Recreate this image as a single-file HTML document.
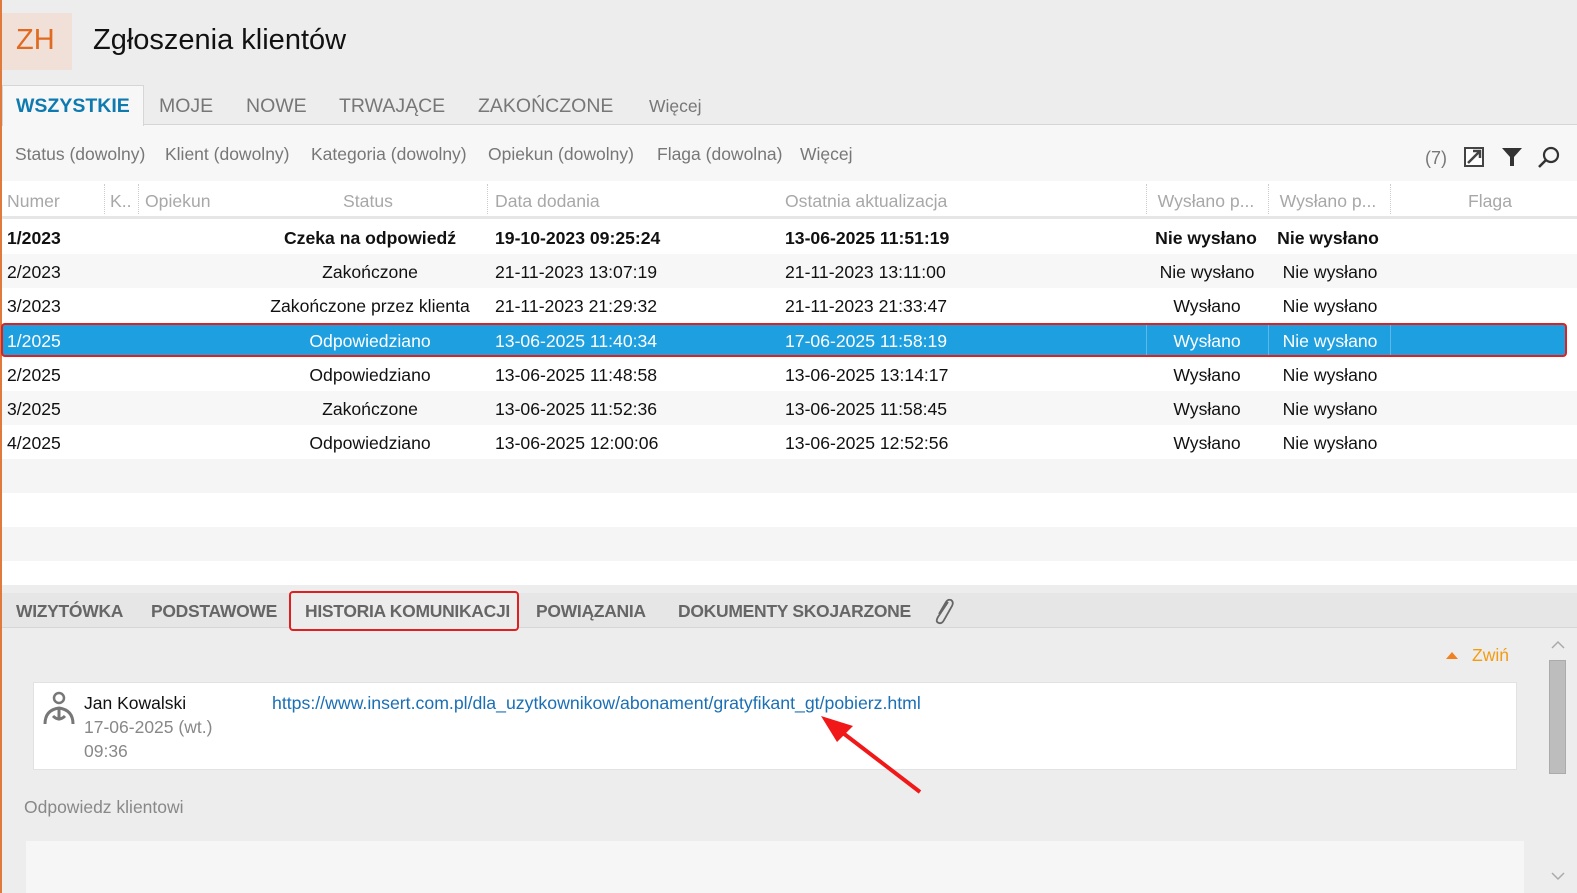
<!DOCTYPE html>
<html><head><meta charset="utf-8"><style>
*{margin:0;padding:0;box-sizing:border-box}
body{width:1577px;height:893px;overflow:hidden;background:#ededed;font-family:"Liberation Sans",sans-serif;position:relative;color:#111}
.a{position:absolute;white-space:nowrap}
.row{position:absolute;left:2px;width:1575px;height:34px;font-size:17.6px}
.row span{position:absolute;top:8px;white-space:nowrap}
.c{transform:translateX(-50%)}
.hd span{color:#a8a8a8}
.tab{position:absolute;top:95px;font-size:19.5px;color:#777}
.btab{position:absolute;top:601px;font-size:17.5px;color:#666;font-weight:bold;letter-spacing:-0.3px}
.flt{position:absolute;top:144px;font-size:17.5px;color:#777}
</style></head><body>
<div class="a" style="left:0;top:0;width:2px;height:893px;background:#e07a3c"></div>
<div class="a" style="left:2px;top:13px;width:70px;height:57px;background:#f0e0d8"></div>
<div class="a" style="left:16px;top:24px;font-size:29px;color:#e06a20">ZH</div>
<div class="a" style="left:93px;top:24px;font-size:29px;color:#111">Zgłoszenia klientów</div>
<div class="a" style="left:2px;top:124px;width:1575px;height:1px;background:#d6d6d6"></div>
<div class="a" style="left:2px;top:125px;width:1575px;height:56px;background:#f7f7f7"></div>
<div class="a" style="left:2px;top:85px;width:142px;height:41px;background:#f7f7f7;border:1px solid #d6d6d6;border-bottom:none"></div>
<div class="tab" style="left:16px;color:#0e7ab0;font-weight:bold">WSZYSTKIE</div>
<div class="tab" style="left:159px">MOJE</div>
<div class="tab" style="left:246px">NOWE</div>
<div class="tab" style="left:339px">TRWAJĄCE</div>
<div class="tab" style="left:478px">ZAKOŃCZONE</div>
<div class="tab" style="left:649px;font-size:17.5px;top:96px">Więcej</div>
<div class="flt" style="left:15px">Status (dowolny)</div>
<div class="flt" style="left:165px">Klient (dowolny)</div>
<div class="flt" style="left:311px">Kategoria (dowolny)</div>
<div class="flt" style="left:488px">Opiekun (dowolny)</div>
<div class="flt" style="left:657px">Flaga (dowolna)</div>
<div class="flt" style="left:800px">Więcej</div>
<div class="a" style="left:1425px;top:148px;font-size:18px;color:#777">(7)</div>
<svg class="a" style="left:1463px;top:146px" width="22" height="22" viewBox="0 0 22 22"><rect x="1" y="1" width="20" height="20" fill="#444"/><rect x="3" y="3" width="16" height="16" fill="#fff"/><path d="M5 17 L17 5 M10 5 H17 V12" stroke="#444" stroke-width="2.5" fill="none"/></svg>
<svg class="a" style="left:1501px;top:147px" width="22" height="20" viewBox="0 0 22 20"><path d="M1 1 H21 L13 10 V19 H9 V10 Z" fill="#333"/></svg>
<svg class="a" style="left:1537px;top:146px" width="24" height="22" viewBox="0 0 24 22"><circle cx="14" cy="9" r="7" stroke="#333" stroke-width="2.2" fill="none"/><path d="M9 14 L2 21" stroke="#333" stroke-width="2.6"/></svg>
<div class="a" style="left:2px;top:181px;width:1575px;height:404px;background:#fff"></div>
<div class="a" style="left:2px;top:216px;width:1575px;height:3px;background:#e6e6e6"></div>
<div class="row hd" style="top:183px"><span style="left:5px">Numer</span><span style="left:108px">K..</span><span style="left:143px">Opiekun</span><span class="c" style="left:366px">Status</span><span style="left:493px">Data dodania</span><span style="left:783px">Ostatnia aktualizacja</span><span class="c" style="left:1204px">Wysłano p...</span><span class="c" style="left:1326px">Wysłano p...</span><span class="c" style="left:1488px">Flaga</span></div>
<div class="a" style="left:104px;top:184px;height:30px;border-left:1px dotted #ccc"></div>
<div class="a" style="left:138px;top:184px;height:30px;border-left:1px dotted #ccc"></div>
<div class="a" style="left:487px;top:184px;height:30px;border-left:1px dotted #ccc"></div>
<div class="a" style="left:1146px;top:184px;height:30px;border-left:1px dotted #ccc"></div>
<div class="a" style="left:1268px;top:184px;height:30px;border-left:1px dotted #ccc"></div>
<div class="a" style="left:1390px;top:184px;height:30px;border-left:1px dotted #ccc"></div>

<div class="row" style="top:220px;font-weight:bold"><span style="left:5px">1/2023</span><span class="c" style="left:368px">Czeka na odpowiedź</span><span style="left:493px">19-10-2023 09:25:24</span><span style="left:783px">13-06-2025 11:51:19</span><span class="c" style="left:1204px">Nie wysłano</span><span class="c" style="left:1326px">Nie wysłano</span></div>
<div class="row" style="top:254px;background:#f7f7f7"><span style="left:5px">2/2023</span><span class="c" style="left:368px">Zakończone</span><span style="left:493px">21-11-2023 13:07:19</span><span style="left:783px">21-11-2023 13:11:00</span><span class="c" style="left:1205px">Nie wysłano</span><span class="c" style="left:1328px">Nie wysłano</span></div>
<div class="row" style="top:288px"><span style="left:5px">3/2023</span><span class="c" style="left:368px">Zakończone przez klienta</span><span style="left:493px">21-11-2023 21:29:32</span><span style="left:783px">21-11-2023 21:33:47</span><span class="c" style="left:1205px">Wysłano</span><span class="c" style="left:1328px">Nie wysłano</span></div>
<div class="row" style="top:323px;height:34px;left:1px;width:1566px;background:#1e9fe0;color:#fff;border:2px solid #e02020;border-radius:4px"><span style="left:4px;top:6px">1/2025</span><span class="c" style="left:367px;top:6px">Odpowiedziano</span><span style="left:492px;top:6px">13-06-2025 11:40:34</span><span style="left:782px;top:6px">17-06-2025 11:58:19</span><span class="c" style="left:1204px;top:6px">Wysłano</span><span class="c" style="left:1327px;top:6px">Nie wysłano</span></div>
<div class="a" style="left:1146px;top:325px;width:1px;height:30px;background:#5bb8e8"></div>
<div class="a" style="left:1268px;top:325px;width:1px;height:30px;background:#5bb8e8"></div>
<div class="a" style="left:1390px;top:325px;width:1px;height:30px;background:#5bb8e8"></div>
<div class="row" style="top:357px"><span style="left:5px">2/2025</span><span class="c" style="left:368px">Odpowiedziano</span><span style="left:493px">13-06-2025 11:48:58</span><span style="left:783px">13-06-2025 13:14:17</span><span class="c" style="left:1205px">Wysłano</span><span class="c" style="left:1328px">Nie wysłano</span></div>
<div class="row" style="top:391px;background:#f7f7f7"><span style="left:5px">3/2025</span><span class="c" style="left:368px">Zakończone</span><span style="left:493px">13-06-2025 11:52:36</span><span style="left:783px">13-06-2025 11:58:45</span><span class="c" style="left:1205px">Wysłano</span><span class="c" style="left:1328px">Nie wysłano</span></div>
<div class="row" style="top:425px"><span style="left:5px">4/2025</span><span class="c" style="left:368px">Odpowiedziano</span><span style="left:493px">13-06-2025 12:00:06</span><span style="left:783px">13-06-2025 12:52:56</span><span class="c" style="left:1205px">Wysłano</span><span class="c" style="left:1328px">Nie wysłano</span></div>
<div class="row" style="top:459px;background:#f5f5f5"></div>
<div class="row" style="top:527px;background:#f5f5f5"></div>
<div class="a" style="left:2px;top:593px;width:1575px;height:35px;background:#e6e6e6;border-bottom:1px solid #d6d6d6"></div>
<div class="btab" style="left:16px">WIZYTÓWKA</div>
<div class="btab" style="left:151px">PODSTAWOWE</div>
<div class="a" style="left:289px;top:591px;width:230px;height:40px;border:2px solid #e02020;border-radius:4px;background:#ececec"></div>
<div class="btab" style="left:305px">HISTORIA KOMUNIKACJI</div>
<div class="btab" style="left:536px">POWIĄZANIA</div>
<div class="btab" style="left:678px">DOKUMENTY SKOJARZONE</div>
<svg class="a" style="left:930px;top:597px" width="26" height="28" viewBox="0 0 26 28"><path d="M18 5 L8 20 Q5 25 9 26 Q12 27 14 23 L22 9 Q24 5 21 3 Q18 2 16 5 L9 17" stroke="#666" stroke-width="1.8" fill="none"/></svg>
<svg class="a" style="left:1446px;top:651px" width="12" height="8"><path d="M0 8 L6 1 L12 8Z" fill="#f08020"/></svg>
<div class="a" style="left:1472px;top:645px;font-size:17.5px;color:#f39c12">Zwiń</div>
<div class="a" style="left:33px;top:682px;width:1484px;height:88px;background:#fff;border:1px solid #e2e2e2"></div>
<svg class="a" style="left:42px;top:690px" width="34" height="36" viewBox="0 0 34 36"><circle cx="17" cy="8" r="5" stroke="#777" stroke-width="2.5" fill="none"/><path d="M3 34 Q3 20 17 18 Q31 20 31 34 M17 18 V28 M11 26 Q17 32 23 26" stroke="#777" stroke-width="3" fill="none"/></svg>
<div class="a" style="left:84px;top:693px;font-size:17.5px;color:#111">Jan Kowalski</div>
<div class="a" style="left:84px;top:717px;font-size:17.5px;color:#888">17-06-2025 (wt.)</div>
<div class="a" style="left:84px;top:741px;font-size:17.5px;color:#888">09:36</div>
<div class="a" style="left:272px;top:693px;font-size:17.7px;color:#1a6fb5">https://www.insert.com.pl/dla_uzytkownikow/abonament/gratyfikant_gt/pobierz.html</div>
<svg class="a" style="left:815px;top:710px" width="115" height="90" viewBox="0 0 115 90"><path d="M105 82 L28 23" stroke="#f01818" stroke-width="4"/><path d="M6 6 L38 16 L22 32 Z" fill="#f01818"/></svg>
<div class="a" style="left:24px;top:797px;font-size:17.5px;color:#888">Odpowiedz klientowi</div>
<div class="a" style="left:26px;top:841px;width:1498px;height:52px;background:#f6f6f6"></div>
<svg class="a" style="left:1551px;top:640px" width="14" height="10"><path d="M1 8 L7 2 L13 8" stroke="#aaa" stroke-width="1.5" fill="none"/></svg>
<div class="a" style="left:1549px;top:660px;width:17px;height:114px;background:#bdbdbd;border:1px solid #ababab"></div>
<svg class="a" style="left:1551px;top:871px" width="14" height="10"><path d="M1 2 L7 8 L13 2" stroke="#aaa" stroke-width="1.5" fill="none"/></svg>
</body></html>
